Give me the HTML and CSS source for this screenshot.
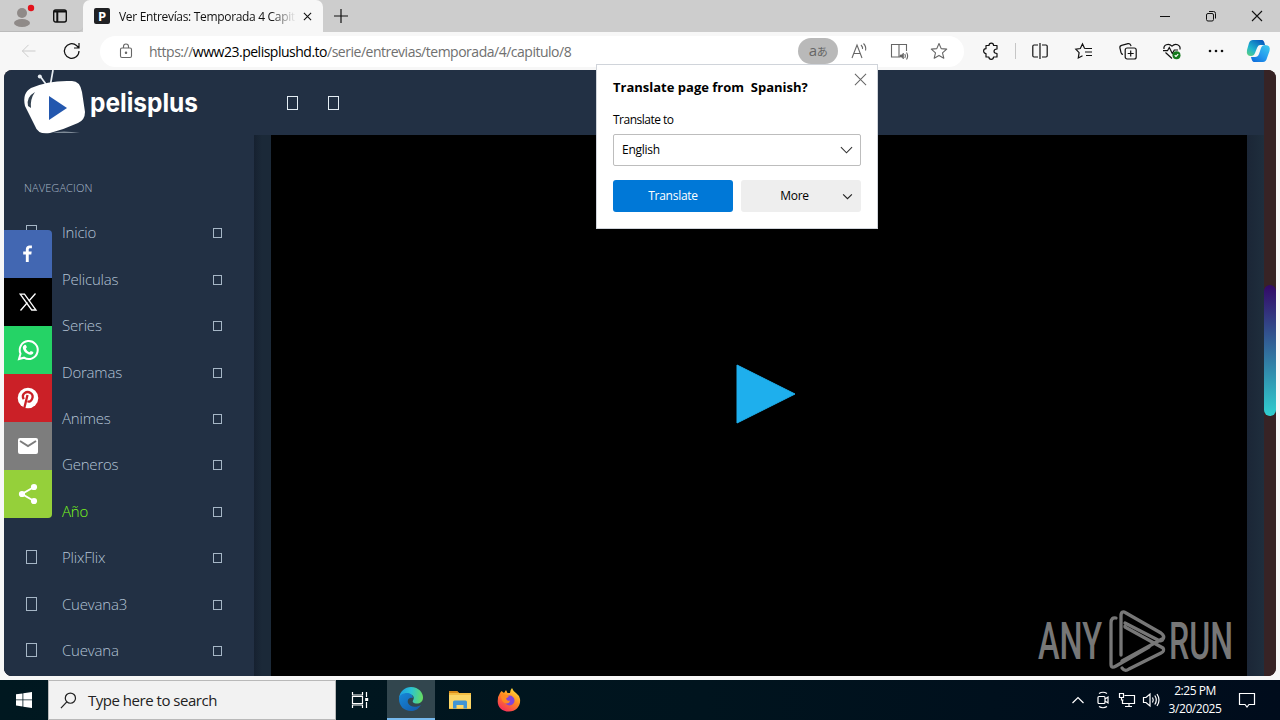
FILE: index.html
```html
<!DOCTYPE html>
<html lang="es">
<head>
<meta charset="utf-8">
<title>Ver Entrevías: Temporada 4 Capitulo 8</title>
<link rel="stylesheet" href="styles.css">
</head>
<body>
<div class="screen">
  <header class="tabstrip">
    <div class="tab-left">
      <svg class="avatar" viewBox="0 0 24 24"><circle cx="12" cy="9" r="5" fill="#8f8a88"/><ellipse cx="12" cy="19" rx="8" ry="4" fill="#8f8a88"/><circle cx="21" cy="4" r="3.2" fill="#e3121b"/></svg>
      <svg class="tabs-icon" viewBox="0 0 16 16" fill="none" stroke="#111" stroke-width="1.4"><rect x="1.7" y="2" width="12.6" height="12" rx="2"/><path d="M2 3.4h12M5.3 4v10" stroke-width="2"/></svg>
    </div>
    <div class="tab">
      <span class="favicon">P</span>
      <span class="tab-title">Ver Entrevías: Temporada 4 Capit</span>
      <svg class="tab-close" viewBox="0 0 10 10" stroke="#111" stroke-width="1.2"><path d="M1 1l8 8M9 1L1 9"/></svg>
    </div>
    <svg class="tab-new" viewBox="0 0 14 14" stroke="#111" stroke-width="1.2"><path d="M7 0v14M0 7h14"/></svg>
    <div class="win-buttons">
      <svg viewBox="0 0 12 12" fill="none" stroke="#111"><path d="M1 6.500h10"/></svg>
      <svg viewBox="0 0 12 12" fill="none" stroke="#111"><rect x="1.500" y="3.500" width="7" height="7.500" rx="1.500"/><path d="M4 1.500h4.500a2 2 0 0 1 2 2V8.500"/></svg>
      <svg viewBox="0 0 12 12" fill="none" stroke="#111" stroke-width="1.100"><path d="M1 1l10 10M11 1L1 11"/></svg>
    </div>
  </header>

  <div class="toolbar">
    <svg class="nav-back" viewBox="0 0 16 16" fill="none" stroke="#c9c9c9" stroke-width="1.1"><path d="M16 8H1M8 1L1 8l7 7"/></svg>
    <svg class="nav-reload" viewBox="0 0 18 18" fill="none" stroke="#111" stroke-width="1.2"><path d="M16 9a7.300 7.300 0 1 1-2.500-5.500L16 6M16 1v5h-5"/></svg>
    <div class="address">
      <svg class="lock" viewBox="0 0 14 16" fill="none" stroke="#666" stroke-width="1.1"><rect x="1.500" y="5" width="11" height="9.500" rx="1.500"/><path d="M4.500 5V3.500a2.500 2.500 0 0 1 5 0V5"/><circle cx="7" cy="9.800" r=".7" fill="#666"/></svg>
      <span class="url">https://<b>www23.pelisplushd.to</b>/serie/entrevias/temporada/4/capitulo/8</span>
      <span class="translate-pill">aあ</span>
      <svg class="tool" viewBox="0 0 18 18" fill="none" stroke="#666" stroke-width="1.100"><path d="M2 16L7 3l5 13M3.800 11.500h6.400M11 3q2 2 1.500 4M13.500 1.500q3 3 2 7"/></svg>
      <svg class="tool" viewBox="0 0 18 18" fill="none" stroke="#666" stroke-width="1.100"><path d="M9 2.500V15H1.500V2.500zM9 2.500h7.500V9M9 15h1"/><path d="M10 13h1.500l2-2v6l-2-2H10z" fill="#666" stroke-width=".6"/><path d="M14.800 12q1.300 2 0 4M16.500 10.500q2.300 3.500 0 7"/></svg>
      <svg class="tool" viewBox="0 0 18 18" fill="none" stroke="#666" stroke-width="1.100"><path d="M9 1.500l2.200 5.100 5.500.5-4.200 3.700 1.300 5.400L9 13.400l-4.800 2.800 1.300-5.400L1.300 7.100l5.500-.5z" stroke-linejoin="round"/></svg>
    </div>
    <div class="tools">
      <svg viewBox="0 0 18 18" fill="none" stroke="#111" stroke-width="1.200"><path d="M4 3.500h3a2.300 2.300 0 0 1 4.600 0H15V7q-3 .2-3 2.200T15 11.500V15h-3.500a2.300 2.300 0 0 1-4.600 0H4v-3.500a2.400 2.400 0 0 1 0-4.800z" stroke-linejoin="round"/></svg>
      <i class="divider"></i>
      <svg viewBox="0 0 18 18" fill="none" stroke="#111" stroke-width="1.200"><path d="M7 3H3Q1.800 3 1.800 4.200v9.600Q1.800 15 3 15h4M11 3h4q1.200 0 1.200 1.200v9.600Q16.200 15 15 15h-4M9 1v16"/></svg>
      <svg viewBox="0 0 18 18" fill="none" stroke="#111" stroke-width="1.200"><path d="M11 6.500L9.500 6.300 7.500 2 5.300 6.500.8 7.100l3.300 3.500L3.300 16l4.200-2.200M10.500 6.500H17M10 10h7M11 13.500h6"/></svg>
      <svg viewBox="0 0 18 18" fill="none" stroke="#111" stroke-width="1.200"><rect x="6.200" y="6" width="11" height="11" rx="2"/><path d="M11.700 8.500v6M8.700 11.500h6M4 12.500Q2.500 12.300 2 10.500L.9 5.800Q.6 3.800 2.600 3.300L9 1.600q2-.3 2.700 1.500l.3 1"/></svg>
      <svg viewBox="0 0 18 18" fill="none" stroke="#111" stroke-width="1.200"><path d="M1 7C.2 3 5.500.5 9 4.200 12.500.5 17.800 3 17 7.500M2.500 10.500L9 16.500M0 8.700h4.500L6.300 5.500l3 6 2-3.500H15"/><circle cx="13.500" cy="13.300" r="4" fill="#13791c" stroke="none"/><path d="M11.700 13.300l1.300 1.200 2.200-2.400" stroke="#fff"/></svg>
      <svg viewBox="0 0 18 18" fill="#111"><circle cx="3" cy="9" r="1.300"/><circle cx="9" cy="9" r="1.300"/><circle cx="15" cy="9" r="1.300"/></svg>
      <svg class="copilot" viewBox="0 0 24 24"><defs><linearGradient id="ca" x1="0" y1="1" x2=".8" y2="0"><stop stop-color="#62d275"/><stop offset=".4" stop-color="#20b5cf"/><stop offset="1" stop-color="#0759bd"/></linearGradient><linearGradient id="cb" x1="0" y1="1" x2=".8" y2="0"><stop stop-color="#0b66d8"/><stop offset=".5" stop-color="#2499ee"/><stop offset="1" stop-color="#39c5ee"/></linearGradient></defs><path d="M7 1h9q2 0 3 5h-5q-2 0-3 3l-2 5q-1 3-4 3-5 0-4-6l2-7Q4 1 7 1z" fill="url(#ca)"/><path d="M17 23H8q-2 0-3-5h4q3 0 4-3l2-6q1-3 4-3 6 0 4.500 6L21 19q-1 4-4 4z" fill="url(#cb)"/></svg>
    </div>
  </div>

  <div class="viewport">
    <div class="site">
      <div class="site-header">
        <svg class="logo" viewBox="0 0 176 65">
          <path d="M16 6l8 11M29 0l-3 17" stroke="#e8edf2" stroke-width="1.700"/><circle cx="15.800" cy="6.500" r="2" fill="#e8edf2"/>
          <path d="M7 18Q25 10 48 11q8 0 10 11l3 20q0 8-7 11-13 6-28 10-12 2-15-7L1 36Q-2 23 7 18z" fill="#fff"/>
          <path d="M4 36q-2-9 7-14Q6 29 7 38z" fill="#33414f"/>
          <path d="M25 26l18 12-18 12z" fill="#2357ae"/><path d="M28 63q10-3 28 0z" fill="#7f8b98"/>
          <text x="66" y="41.500" class="logo-text" textLength="108" lengthAdjust="spacingAndGlyphs">pelisplus</text>
        </svg>
        <i class="glyph head-glyph"></i><i class="glyph head-glyph"></i>
      </div>
      <div class="site-body">
        <nav class="sidebar">
          <div class="nav-title">NAVEGACION</div>
          <div class="row"><i class="glyph big"></i><span>Inicio</span><i class="glyph"></i></div>
          <div class="row"><i class="glyph big"></i><span>Peliculas</span><i class="glyph"></i></div>
          <div class="row"><i class="glyph big"></i><span>Series</span><i class="glyph"></i></div>
          <div class="row"><i class="glyph big"></i><span>Doramas</span><i class="glyph"></i></div>
          <div class="row"><i class="glyph big"></i><span>Animes</span><i class="glyph"></i></div>
          <div class="row"><i class="glyph big"></i><span>Generos</span><i class="glyph"></i></div>
          <div class="row"><i class="glyph big"></i><span class="active">Año</span><i class="glyph"></i></div>
          <div class="row"><i class="glyph big"></i><span>PlixFlix</span><i class="glyph"></i></div>
          <div class="row"><i class="glyph big"></i><span>Cuevana3</span><i class="glyph"></i></div>
          <div class="row"><i class="glyph big"></i><span>Cuevana</span><i class="glyph"></i></div>
        </nav>
        <main class="player">
          <svg class="play" viewBox="0 0 60 60"><path d="M1 1l58 29L1 59z" fill="#1eafed" stroke="#1eafed" stroke-linejoin="round"/></svg>
          <svg class="watermark" viewBox="0 0 194 64">
            <text x="0" y="50" class="mark-text" textLength="64" lengthAdjust="spacingAndGlyphs">ANY</text>
            <text x="131" y="50" class="mark-text" textLength="64" lengthAdjust="spacingAndGlyphs">RUN</text>
            <g fill="none" stroke="#777" stroke-width="3.300" stroke-linejoin="round" stroke-linecap="round"><path d="M78 9q-5-1-5 5v41q0 5 5 2l33-19"/><path d="M83 46V7q0-6 5-3l35 20q4 3 2 6-1 3-5 1L87 14"/><path d="M87 17v1l38 21q2 3-2 5L91 60q-4 3-7-1"/><path d="M84 52l40-22"/></g>
          </svg>
        </main>
        <div class="gutter"></div>
      </div>
    </div>
    <div class="scroll"><div class="thumb"></div></div>

    <div class="share">
      <span class="fb"><svg viewBox="0 0 32 32"><path fill="#fff" d="M17.800 27V17h3.400l.5-4h-3.900v-2.500c0-1.100.4-1.900 2-1.900H22V5.200c-.4-.1-1.600-.2-3-.2-3 0-5 1.800-5 5.200V13h-3.500v4H14v10z" transform="translate(3.200 3.600) scale(.76)"/></svg></span>
      <span class="x"><svg viewBox="0 0 32 32"><path fill="none" stroke="#fff" stroke-width="1.300" d="M8.200 8.200h4.300l11.500 15.800h-4.300zM23.500 7.500l-6.800 7.800M8.500 24.500l7-8"/></svg></span>
      <span class="wa"><svg viewBox="0 0 32 32"><path d="M7 25l1.500-5.300A9 9 0 1 1 12 23.700z" fill="none" stroke="#fff" stroke-width="2"/><path fill="#fff" d="M12.500 11c.6-.5 1.200-.4 1.500.2l.8 1.900c.2.500-.7 1.200-.9 1.600.8 1.700 2 2.800 3.700 3.500l1.200-1.300 2.500 1.200c.3 2-1.400 2.700-2.700 2.600-4.500-.5-7.700-4-7.800-7.500q.2-1.500 1.700-2.200z"/></svg></span>
      <span class="pin"><svg viewBox="0 0 32 32"><circle cx="16" cy="16" r="10.300" fill="#fff"/><path d="M12.300 26L15.500 13M11.800 17.200c-3.200-5.500 3-8.600 6.700-6.300 4.500 3 .8 10.200-3 8.400" fill="none" stroke="#cb2027" stroke-width="2.300"/></svg></span>
      <span class="mail"><svg viewBox="0 0 32 32"><rect x="6" y="8" width="20" height="16" rx="2" fill="#fff"/><path d="M8 11l8 5 8-5" fill="none" stroke="#7d7d7d" stroke-width="2"/></svg></span>
      <span class="more-share"><svg viewBox="0 0 32 32"><path d="M22 9L10 16l12 7" fill="none" stroke="#fff" stroke-width="2"/><g fill="#fff"><circle cx="22" cy="9" r="3.100"/><circle cx="10" cy="16" r="3.100"/><circle cx="22" cy="23" r="3.100"/></g></svg></span>
    </div>
  </div>

  <footer class="taskbar">
    <div class="start"><svg viewBox="0 0 16 16" fill="#fff"><path d="M0 2.300l6.500-.9v6.100H0zM7.300 1.300L16 0v7.500H7.300zM0 8.300h6.500v6.100L0 13.500zM7.300 8.300H16V16l-8.700-1.300z"/></svg></div>
    <div class="search"><svg viewBox="0 0 18 18" fill="none" stroke="#222" stroke-width="1.300"><circle cx="11" cy="6.500" r="5.400"/><path d="M7.200 10.400L1 17"/></svg><span>Type here to search</span></div>
    <div class="task"><svg class="i18" viewBox="0 0 18 18" fill="none" stroke="#fff" stroke-width="1.200"><path d="M1.500 1v3h10V1M1.500 17v-3h10v3M1.500 5.500h10v7h-10zM15.500 1v5M15.500 11v6"/><path d="M14.200 7h3v3h-3z" fill="#fff" stroke="none"/></svg></div>
    <div class="task current"><svg class="i24" viewBox="0 0 24 24"><defs><linearGradient id="eg" x1="0" y1=".3" x2="1" y2=".4"><stop stop-color="#1c9de4"/><stop offset=".5" stop-color="#2bc3d2"/><stop offset="1" stop-color="#65dc62"/></linearGradient><linearGradient id="eb" x1="0" y1="0" x2="1" y2="1"><stop stop-color="#1688d8"/><stop offset="1" stop-color="#1458a8"/></linearGradient></defs><path d="M0 11C1 4 6 0 12 0c8 0 12 6 12 10.500 0 4-3 6-6 6-3.500 0-5-1.500-4-3 2.500-4-1-6.500-5-6.500-4 0-7 1.500-9 4z" fill="url(#eg)"/><path d="M0 12c0-4 4-6 8-6 3 0 6 2 6 5-4-1-6 2-5 5 1.500 4 8 5 13 2-3 4.500-6 6-10 6C5 24 0 19 0 12z" fill="url(#eb)"/></svg></div>
    <div class="task"><svg class="i24" viewBox="0 0 24 24"><path d="M1 3h8l2 2h12v16H1z" fill="#f3bd42"/><path d="M1 3h8l2 2H1z" fill="#d98c18"/><path d="M1 7h22v13H1z" fill="#fbd667"/><path d="M5 20.500V14q0-1.500 1.500-1.500h11q1.500 0 1.500 1.500v6.500h-3.500V17h-7v3.500z" fill="#3f94d3"/></svg></div>
    <div class="task"><svg class="i24" viewBox="0 0 24 24"><defs><linearGradient id="ff" x1=".8" y1="0" x2=".2" y2="1"><stop stop-color="#ffe43b"/><stop offset=".45" stop-color="#ff8b20"/><stop offset="1" stop-color="#f6265f"/></linearGradient></defs><path d="M3 5l1.500-2L7 5l2-3 1.500 3L13 5q0-3 2-5 1 3 4 5t4 6c1 7-4 12.500-11 12.500S.5 19 .7 13Q.8 8 3 5z" fill="url(#ff)"/><circle cx="12.500" cy="12.500" r="5" fill="#8245d8"/><path d="M4 7q4-1 8 1.500l-3 2q1 3 4 2 0 3-4 3-5-1-5-8.500z" fill="#ff8a20"/></svg></div>
    <div class="tray">
      <svg class="t-up" viewBox="0 0 14 10" fill="none" stroke="#fff" stroke-width="1.200"><path d="M1.500 8L7 2.500 12.500 8"/></svg>
      <svg class="t-cam" viewBox="0 0 14 18" fill="none" stroke="#fff" stroke-width="1.200"><rect x="2" y="5.500" width="7" height="7" rx="1"/><path d="M9 8l3-2v6l-3-2M3 2.500q4-2.500 8 0M3 15.500q4 2.500 8 0"/></svg>
      <svg class="t-net" viewBox="0 0 18 18" fill="none" stroke="#fff" stroke-width="1.200"><path d="M6.500 4.500h10v8h-12V9M11 12.500v3M7 15.500h7M1.500 2.500h4v4h-4zM3.500 6.500v2.500h2"/></svg>
      <svg class="t-vol" viewBox="0 0 18 18" fill="none" stroke="#fff" stroke-width="1.200"><path d="M1.500 6.500H4l4-3.500v12l-4-3.500H1.500zM10.500 6.500q1.500 2.500 0 5M12.800 4.500q3 4.500 0 9M15 3q4 6 0 12"/></svg>
      <div class="clock"><span class="time">2:25 PM</span><span class="date">3/20/2025</span></div>
      <svg class="t-note" viewBox="0 0 18 18" fill="none" stroke="#fff" stroke-width="1.200"><path d="M1.500 2.500h15v11H11L9 16l-2-2.500H1.500z"/></svg>
    </div>
  </footer>

  <div class="dialog">
    <svg class="dialog-close" viewBox="0 0 14 14" stroke="#666" stroke-width="1.100"><path d="M1 1l12 12M13 1L1 13"/></svg>
    <div class="dialog-title">Translate page from&nbsp; Spanish?</div>
    <div class="dialog-label">Translate to</div>
    <div class="select"><span>English</span><svg viewBox="0 0 14 8" fill="none" stroke="#333" stroke-width="1.200"><path d="M1 1l6 6 6-6"/></svg></div>
    <div class="buttons"><div class="btn primary"><span>Translate</span></div><div class="btn"><span class="more">More</span><svg viewBox="0 0 12 8" fill="none" stroke="#222" stroke-width="1.300"><path d="M1 1.500l5 5 5-5"/></svg></div></div>
  </div>
</div>
</body>
</html>
```

FILE: styles.css
```css
* { box-sizing: border-box; }
body { margin: 0; background: #f7f7f7; font-family: "Open Sans", "Noto Sans", "Noto Sans CJK JP", sans-serif; }
svg { display: block; flex: none; overflow: visible; }
.screen { position: relative; width: 1280px; height: 720px; overflow: hidden; display: flex; flex-direction: column; }

.tabstrip { height: 32px; flex: none; display: flex; align-items: center; background: #cdcdcd; }
.tab-left { width: 83px; height: 32px; display: flex; align-items: center; padding-left: 10px; gap: 18px; border-bottom: 1px solid #bbb; border-bottom-right-radius: 5px; }
.avatar { width: 24px; height: 24px; }
.tabs-icon { width: 16px; height: 16px; }
.tab { width: 240px; height: 32px; background: #f7f7f7; border-radius: 7px 7px 0 0; display: flex; align-items: center; padding-left: 11px; }
.favicon { width: 16px; height: 16px; border-radius: 2px; background: #202124; color: #fff; font: 700 13px/16px "Open Sans", sans-serif; text-align: center; }
.tab-title { width: 177px; margin-left: 9px; white-space: nowrap; font-size: 12px; letter-spacing: -.32px; color: #111; -webkit-mask-image: linear-gradient(90deg, #000 86%, transparent); mask-image: linear-gradient(90deg, #000 86%, transparent); }
.tab-close { width: 9px; height: 9px; margin-left: 7px; }
.tab-new { width: 14px; height: 14px; margin-left: 11px; }
.win-buttons { margin-left: auto; display: flex; gap: 34px; padding-right: 17px; }
.win-buttons svg { width: 12px; height: 12px; }

.toolbar { height: 38px; flex: none; display: flex; align-items: center; background: #f7f7f7; }
.nav-back { width: 15px; height: 14px; margin-left: 21px; }
.nav-reload { width: 18px; height: 18px; margin-left: 27px; }
.address { width: 864px; height: 31px; margin-left: 19px; background: #fff; border-radius: 16px; display: flex; align-items: center; padding-left: 19px; }
.lock { width: 14px; height: 16px; }
.url { width: 649px; flex: none; margin-left: 16px; white-space: nowrap; font-size: 14px; letter-spacing: -.49px; color: #707070; }
.url b { font-weight: 400; color: #000; }
.translate-pill { width: 40px; flex: none; height: 26px; border-radius: 13px; margin-right: 12px; background: #b9b9b9; color: #666; text-align: center; font-size: 11px; line-height: 24px; letter-spacing: -.5px; font-family: "Open Sans", "Noto Sans CJK JP", sans-serif; }
.translate-pill::first-letter { font-size: 15px; }
.tool { width: 18px; height: 18px; margin-right: 22px; }
.tools { display: flex; align-items: center; margin-left: 18px; }
.tools svg { width: 18px; height: 18px; margin-right: 26px; }
.tools svg:first-child { margin-right: 15px; }
.tools .divider { width: 1px; height: 16px; background: #c6c6c6; margin-right: 15px; }
.tools .copilot { width: 24px; height: 24px; margin: 0 0 0 -5px; }

.viewport { position: relative; height: 606px; margin: 0 4px 4px; flex: none; display: flex; border-radius: 8px; overflow: hidden; background: #372325; }
.site { width: 1260px; display: flex; flex-direction: column; }
.site-header { height: 65px; background: #223044; display: flex; align-items: center; padding-left: 20px; }
.logo { width: 176px; height: 65px; margin-right: 87px; }
.logo-text { font: 700 26px "Inter", sans-serif; fill: #fff; }
.glyph { display: block; flex: none; width: 9px; height: 10px; border: 1px solid #a6b6c6; }
.glyph.head-glyph { width: 11px; height: 14px; border-color: #e4edf4; margin-right: 30px; }
.site-body { height: 541px; display: flex; background: linear-gradient(90deg, #162130 250px, #1b2938 258px, #1b2735); }
.sidebar { width: 250px; height: 541px; background: #223044; color: #b4c4d6; overflow: hidden; }
.nav-title { height: 75px; padding: 45px 0 0 20px; font-size: 11px; line-height: 16px; letter-spacing: .1px; font-weight: 300; color: #a9b8ca; }
.row { height: 46.45px; display: flex; align-items: center; padding-left: 23px; font-size: 15px; font-weight: 300; }
.row span { width: 151px; margin-left: 24px; letter-spacing: -.2px; line-height: 20px; padding-bottom: 2px; }
.row .active { color: #7cfc1c; }
.glyph.big { width: 11px; height: 14px; margin: 0 0 2px -1px; }
.glyph.big + span { margin-left: 25px; }
.player { position: relative; width: 976px; margin-left: 17px; background: #000; }
.play { position: absolute; left: 465px; top: 229px; width: 60px; height: 60px; }
.watermark { position: absolute; left: 767px; top: 474px; width: 194px; height: 64px; }
.mark-text { font: 500 51px "Roboto", sans-serif; fill: #777; }
.gutter { flex: 1; background: linear-gradient(90deg, #1b2636, #1f2e3d); }
.scroll { width: 12px; padding-top: 215px; background: #372325; }
.thumb { height: 131px; border-radius: 6px; background: linear-gradient(#330867, #30cfd0); }
.share { position: absolute; left: 0; top: 160px; width: 48px; border-radius: 0 4px 4px 0; overflow: hidden; }
.share span { display: flex; width: 48px; height: 48px; align-items: center; justify-content: center; }
.share svg { width: 32px; height: 32px; }
.fb { background: #4267b2; } .x { background: #000; } .wa { background: #25d366; } .pin { background: #cb2027; } .mail { background: #7d7d7d; } .more-share { background: #95d03a; }

.taskbar { height: 40px; flex: none; display: flex; background: linear-gradient(90deg, #001820, #00141e 55%, #000c1c); }
.start { width: 48px; display: flex; align-items: center; justify-content: center; }
.start svg { width: 16px; height: 16px; }
.search { width: 288px; background: #f2f2f2; border: 1px solid #b9b9b9; display: flex; align-items: center; padding-left: 11px; font-size: 15px; color: #222; letter-spacing: -.48px; white-space: nowrap; }
.search svg { width: 17px; height: 17px; margin-right: 11px; }
.task { width: 49px; display: flex; align-items: center; justify-content: center; }
.task:nth-child(3) { width: 51px; padding-right: 3px; }
.task.current { width: 48px; background: #32464e; border-bottom: 2px solid #76b9ed; }
.i18 { width: 18px; height: 18px; } .i24 { width: 24px; height: 24px; }
.tray { margin-left: auto; display: flex; align-items: center; color: #fff; padding-right: 24px; }
.t-up { width: 14px; height: 10px; margin-right: 11px; }
.t-cam { width: 14px; height: 18px; margin-right: 8px; }
.t-net, .t-vol { width: 18px; height: 18px; margin-right: 6px; }
.clock { width: 54px; margin: 0 16px 0 2px; display: flex; flex-direction: column; align-items: center; font-size: 12px; line-height: 18px; letter-spacing: -.45px; white-space: nowrap; }
.t-note { width: 18px; height: 18px; }

.dialog { position: absolute; left: 596px; top: 64px; width: 282px; height: 165px; padding: 12px 16px; background: #fff; border: 1px solid #d0d4da; font-size: 12px; color: #000; }
.dialog-close { position: absolute; right: 10px; top: 8px; width: 13px; height: 13px; }
.dialog-title { font-weight: 700; font-size: 13px; line-height: 20px; letter-spacing: 0; white-space: nowrap; }
.dialog-label { margin: 14px 0 5px; line-height: 18px; letter-spacing: -.5px; }
.select { height: 32px; border: 1px solid #bdbdbd; border-radius: 2px; display: flex; align-items: center; justify-content: space-between; padding: 0 7px 0 8px; letter-spacing: -.25px; }
.select span, .btn span { padding-bottom: 1px; }
.select svg { width: 13px; height: 8px; }
.buttons { display: flex; gap: 8px; margin-top: 14px; }
.btn { width: 120px; height: 32px; border-radius: 3px; background: #eee; display: flex; align-items: center; justify-content: center; letter-spacing: -.25px; }
.btn.primary { background: #0078d7; color: #fff; }
.btn .more { margin: 0 33px 0 31px; }
.btn svg { width: 11px; height: 7px; }
```
